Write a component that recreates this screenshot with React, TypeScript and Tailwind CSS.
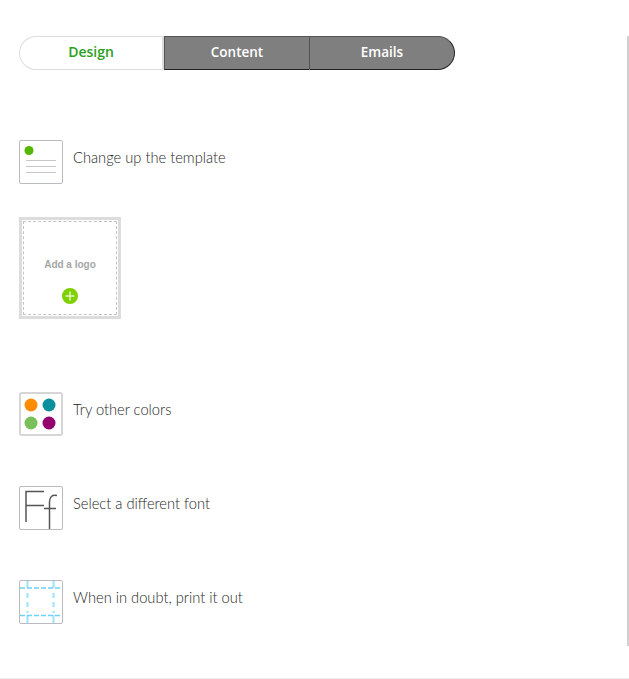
import React from "react";

const rowText = "text-[14.7px] leading-[20px] text-[#262626] font-['Lato',sans-serif] font-light ml-[10px] mt-[7px]";

function IconBox({ children, className = "" }: { children: React.ReactNode; className?: string }) {
  return (
    <div className={`w-[44px] h-[44px] shrink-0 rounded-[2px] border border-[#b8bcc2] bg-white relative overflow-hidden ${className}`}>
      {children}
    </div>
  );
}

export default function App() {
  return (
    <div className="w-[629px] h-[679px] bg-white overflow-hidden flex flex-col">
      <div className="flex flex-1 min-h-0">
        <div className="w-[627px] pt-[36px] pl-[19px] flex flex-col">
          <div className="flex w-[436px] h-[34px] font-['Open_Sans',sans-serif]">
            <div className="w-[145px] text-[14px] rounded-l-[17px] border border-r-2 border-[#dcdcdc] bg-white text-[#2ca01c] font-semibold flex items-center justify-center pb-[3px]">Design</div>
            <div className="w-[145px] text-[13.5px] border-t border-b border-l border-t-[#555] border-b-[#222] border-l-[#555] bg-[#7f7f7f] text-white font-semibold flex items-center justify-center pb-[2px]">Content</div>
            <div className="flex-1 text-[13.5px] rounded-r-[17px] border border-l border-t-[#555] border-b-[#222] border-r-[#222] border-l-[#555] bg-[#7f7f7f] text-white font-semibold flex items-center justify-center pb-[2px]">Emails</div>
          </div>

          <div className="mt-[70px] flex items-start">
            <IconBox>
              <svg width="42" height="42" viewBox="0 0 42 42">
                <circle cx="9" cy="9.5" r="4.5" fill="#53b700" />
                <path d="M6 19.5H36M6 25.5H36M6 31.5H36" stroke="#c4c6ca" strokeWidth="1" />
              </svg>
            </IconBox>
            <span className={rowText}>Change up the template</span>
          </div>

          <div className="mt-[33px] w-[102px] h-[102px] border-[3px] border-[#dcdcdc] p-[1px]">
            <div className="w-full h-full border border-dashed border-[#c4c4c4] flex flex-col items-center">
              <span className="mt-[36px] text-[10px] leading-[14px] font-bold text-[#a6a6a6] font-['Liberation_Sans',sans-serif]">Add a logo</span>
              <svg className="mt-[16px]" width="16" height="16" viewBox="0 0 16 16">
                <circle cx="8" cy="8" r="8" fill="#7fd000" />
                <path d="M8 3.5V12.5M3.5 8H12.5" stroke="#e4f6c8" strokeWidth="1.5" />
              </svg>
            </div>
          </div>

          <div className="mt-[73px] flex items-start">
            <IconBox className="border-[#d6d6d6] rounded-[3px] border-2">
              <svg width="40" height="40" viewBox="0 0 40 40">
                <circle cx="10" cy="11" r="6.5" fill="#ff8c00" />
                <circle cx="28" cy="11" r="6.5" fill="#0b8f9d" />
                <circle cx="10" cy="29" r="6.5" fill="#7ac05a" />
                <circle cx="28" cy="29" r="6.5" fill="#93006e" />
              </svg>
            </IconBox>
            <span className={rowText}>Try other colors</span>
          </div>

          <div className="mt-[50px] flex items-start">
            <IconBox>
              <svg width="42" height="42" viewBox="0 0 42 42" fill="none" stroke="#555" strokeWidth="1.5">
                <path d="M6 35V4.5H24M6 18.5H24" />
                <path d="M37 8.5C32 7.5 29.5 10 29.5 15V42M24 21.5H36" />
              </svg>
            </IconBox>
            <span className={rowText}>Select a different font</span>
          </div>

          <div className="mt-[50px] flex items-start">
            <IconBox>
              <svg width="42" height="42" viewBox="0 0 42 42" fill="none">
                <path d="M7.5 0V7M7.5 34V42M33.5 0V7M33.5 34V42M7.5 12V17M7.5 21V26M7.5 30V32M33.5 12V17M33.5 21V26M33.5 30V32" stroke="#a4e4fd" strokeWidth="2.2" />
                <path d="M0 7H42M0 34.5H42" stroke="#6fd0fa" strokeWidth="1.5" strokeDasharray="5 2" />
              </svg>
            </IconBox>
            <span className={rowText}>When in doubt, print it out</span>
          </div>
        </div>
        <div className="mt-[36px] h-[610px] w-[2px] bg-[#d0d0d0]" />
      </div>
      <div className="h-px bg-[#eeeeef]" />
    </div>
  );
}
